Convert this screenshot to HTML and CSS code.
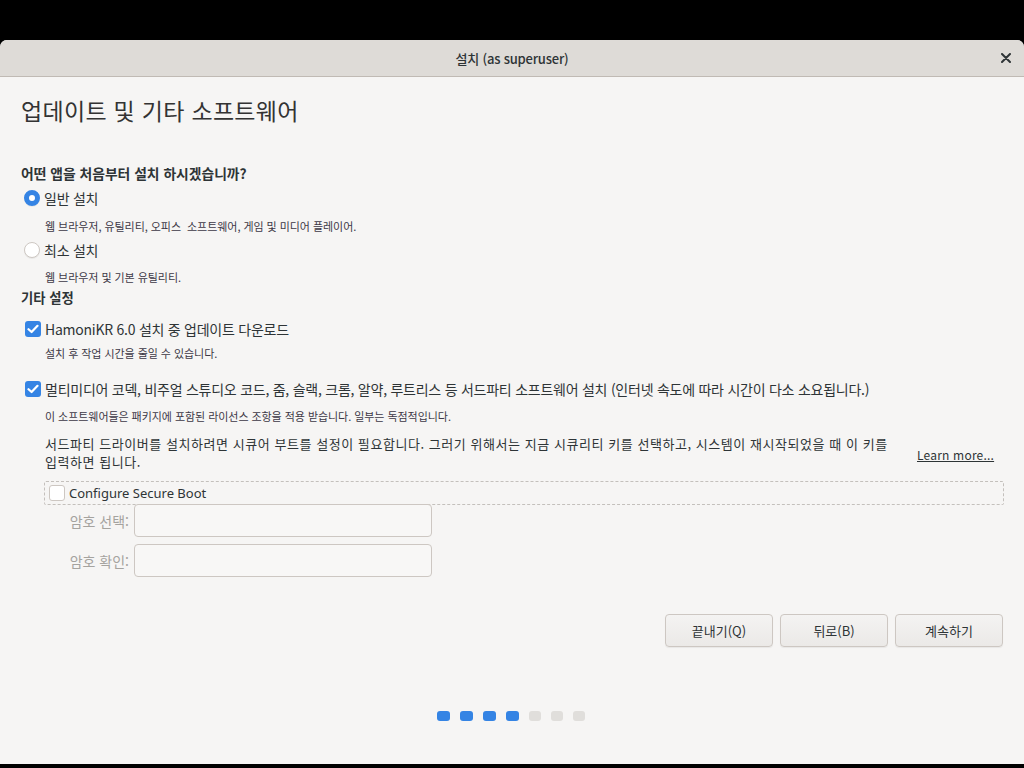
FILE: index.html
```html
<!DOCTYPE html>
<html lang="ko">
<head>
<meta charset="utf-8">
<title>설치</title>
<link rel="stylesheet" href="styles.css">
</head>
<body>
<div class="window">
  <div class="titlebar">
    <span class="title">설치 (as superuser)</span>
    <span class="close">
      <svg width="10" height="10" viewBox="0 0 10 10"><path d="M1 1L9 9M9 1L1 9" stroke="#2e3436" stroke-width="2" stroke-linecap="round"/></svg>
    </span>
  </div>
  <div class="content">
    <h1 class="heading">업데이트 및 기타 소프트웨어</h1>

    <div class="section-title q">어떤 앱을 처음부터 설치 하시겠습니까?</div>
    <div class="option r1"><span class="radio checked"></span><span class="label">일반 설치</span></div>
    <div class="desc d1">웹 브라우저, 유틸리티, 오피스&nbsp; 소프트웨어, 게임 및 미디어 플레이어.</div>
    <div class="option r2"><span class="radio"></span><span class="label">최소 설치</span></div>
    <div class="desc d2">웹 브라우저 및 기본 유틸리티.</div>

    <div class="section-title s2">기타 설정</div>
    <div class="option c1"><span class="check"><svg width="12" height="10" viewBox="0 0 12 10"><path d="M1.5 5.2L4.6 8L10.5 1.8" fill="none" stroke="#fff" stroke-width="2.2" stroke-linecap="round" stroke-linejoin="round"/></svg></span><span class="label">HamoniKR 6.0 설치 중 업데이트 다운로드</span></div>
    <div class="desc d3">설치 후 작업 시간을 줄일 수 있습니다.</div>
    <div class="option c2"><span class="check"><svg width="12" height="10" viewBox="0 0 12 10"><path d="M1.5 5.2L4.6 8L10.5 1.8" fill="none" stroke="#fff" stroke-width="2.2" stroke-linecap="round" stroke-linejoin="round"/></svg></span><span class="label">멀티미디어 코덱, 비주얼 스튜디오 코드, 줌, 슬랙, 크롬, 알약, 루트리스 등 서드파티 소프트웨어 설치 (인터넷 속도에 따라 시간이 다소 소요됩니다.)</span></div>
    <div class="desc d4">이 소프트웨어들은 패키지에 포함된 라이선스 조항을 적용 받습니다. 일부는 독점적입니다.</div>

    <div class="para-row">
      <p class="para">서드파티 드라이버를 설치하려면 시큐어 부트를 설정이 필요합니다. 그러기 위해서는 지금 시큐리티 키를 선택하고, 시스템이 재시작되었을 때 이 키를 입력하면 됩니다.</p>
      <a class="learn">Learn more...</a>
    </div>

    <div class="secure-box">
      <span class="check empty"></span><span class="secure-label">Configure Secure Boot</span>
    </div>
    <div class="pw-row pw1"><span class="pw-label">암호 선택:</span><span class="input"></span></div>
    <div class="pw-row pw2"><span class="pw-label">암호 확인:</span><span class="input"></span></div>

    <div class="buttons">
      <button class="btn">끝내기(Q)</button>
      <button class="btn">뒤로(B)</button>
      <button class="btn">계속하기</button>
    </div>

    <div class="dots">
      <span class="dot on"></span><span class="dot on"></span><span class="dot on"></span><span class="dot on"></span><span class="dot"></span><span class="dot"></span><span class="dot"></span>
    </div>
  </div>
</div>
</body>
</html>
```

FILE: styles.css
```css
* { box-sizing: border-box; }
html, body { margin: 0; padding: 0; }
body {
  background: #000;
  width: 1024px;
  height: 768px;
  overflow: hidden;
  font-family: "Noto Sans CJK KR", "Noto Sans", sans-serif;
  color: #3d3846;
}
.window {
  margin-top: 40px;
  height: 724px;
  background: #f6f5f4;
  border-radius: 7px 7px 0 0;
  overflow: hidden;
  display: flex;
  flex-direction: column;
}
.titlebar {
  height: 37px;
  background: #dedbd7;
  border-bottom: 1px solid #c0bab4;
  display: flex;
  align-items: center;
  justify-content: center;
  position: relative;
}
.title {
  font-size: 13px;
  font-weight: 500;
  color: #2e3436;
  letter-spacing: -0.2px;
}
.close {
  position: absolute;
  right: 13px;
  top: 13px;
  width: 10px;
  height: 10px;
  display: flex;
}
.content {
  padding: 17px 20px 0 20px;
  display: flex;
  flex-direction: column;
}
.heading {
  margin: 0 0 0 1px;
  font-size: 23px;
  line-height: 32px;
  font-weight: 400;
  color: #333;
  letter-spacing: 0.3px;
}
.section-title {
  font-size: 13.8px;
  font-weight: 700;
  line-height: 20px;
  color: #2e3436;
  margin-left: 1px;
}
.s2 { font-size: 13.3px; }
.q { margin-top: 37px; }
.s2 { margin-top: 2px; }
.option {
  display: flex;
  align-items: center;
  height: 24px;
  margin-left: 4px;
}
.r1 { margin-top: 3px; }
.r2 { margin-top: 3px; }
.c1 { margin-top: 9px; }
.c2 { margin-top: 15px; }
.label {
  font-size: 14px;
  letter-spacing: -0.25px;
  color: #2e3436;
  margin-left: 4px;
  white-space: nowrap;
}
.radio {
  width: 16px;
  height: 16px;
  border-radius: 50%;
  background: #fff;
  border: 1px solid #cdc7c2;
  box-shadow: 0 1px 0 rgba(0,0,0,0.05);
  flex: none;
}
.radio.checked {
  background: #fff;
  border: 5px solid #3584e4;
}
.check {
  width: 16px;
  height: 16px;
  border-radius: 3px;
  background: #3584e4;
  display: flex;
  align-items: center;
  justify-content: center;
  flex: none;
  margin-left: 1px;
}
.check.empty {
  background: #fff;
  border: 1px solid #cdc7c2;
  margin-left: 0;
}
.desc {
  font-size: 11px;
  line-height: 18px;
  color: #3d3846;
  margin-left: 25px;
  letter-spacing: -0.05px;
}
.d1 { margin-top: 7px; }
.d2 { margin-top: 6px; }
.d3 { margin-top: 3px; }
.d4 { margin-top: 6px; }
.para-row {
  display: flex;
  align-items: center;
  margin-top: 10px;
  margin-left: 25px;
}
.para {
  margin: 0;
  width: 862px;
  font-size: 13px;
  letter-spacing: 0.55px;
  line-height: 18px;
  color: #2e3436;
  word-break: keep-all;
}
.learn {
  margin-left: 10px;
  margin-top: 2px;
  font-size: 12px;
  letter-spacing: 0.2px;
  color: #2e3436;
  text-decoration: underline;
  white-space: nowrap;
}
.secure-box {
  margin-top: 10px;
  margin-left: 24px;
  height: 24px;
  border: 1px dashed #c4c0bc;
  border-radius: 2px;
  display: flex;
  align-items: center;
  padding-left: 4px;
}
.secure-label {
  font-size: 13px;
  color: #2e3436;
  margin-left: 4px;
  font-family: "Noto Sans", "Noto Sans CJK KR", sans-serif;
}
.pw-row {
  display: flex;
  align-items: center;
  margin-left: 24px;
}
.pw1 { margin-top: -1px; }
.pw2 { margin-top: 7px; }
.pw-label {
  width: 86px;
  text-align: right;
  font-size: 14px;
  color: #a5a39f;
  padding-right: 1px;
}
.input {
  margin-left: 4px;
  width: 298px;
  height: 33px;
  border: 1px solid #cdc7c2;
  border-radius: 4px;
  background: #f8f7f6;
}
.buttons {
  display: flex;
  justify-content: flex-end;
  gap: 7px;
  margin-top: 37px;
  padding-right: 1px;
}
.btn {
  width: 108px;
  height: 33px;
  border: 1px solid #cdc7c2;
  border-radius: 4px;
  background: linear-gradient(#f4f3f2, #ebe9e7);
  box-shadow: 0 1px 1px rgba(0,0,0,0.06);
  font-family: "Noto Sans CJK KR", sans-serif;
  font-size: 13px;
  color: #2e3436;
  padding: 0;
}
.dots {
  display: flex;
  justify-content: center;
  gap: 10px;
  margin-top: 64px;
  margin-left: -2px;
}
.dot {
  width: 12px;
  height: 10px;
  border-radius: 3px;
  background: #e0dedb;
}
.dot.on {
  width: 13px;
  background: #3584e4;
}
```
